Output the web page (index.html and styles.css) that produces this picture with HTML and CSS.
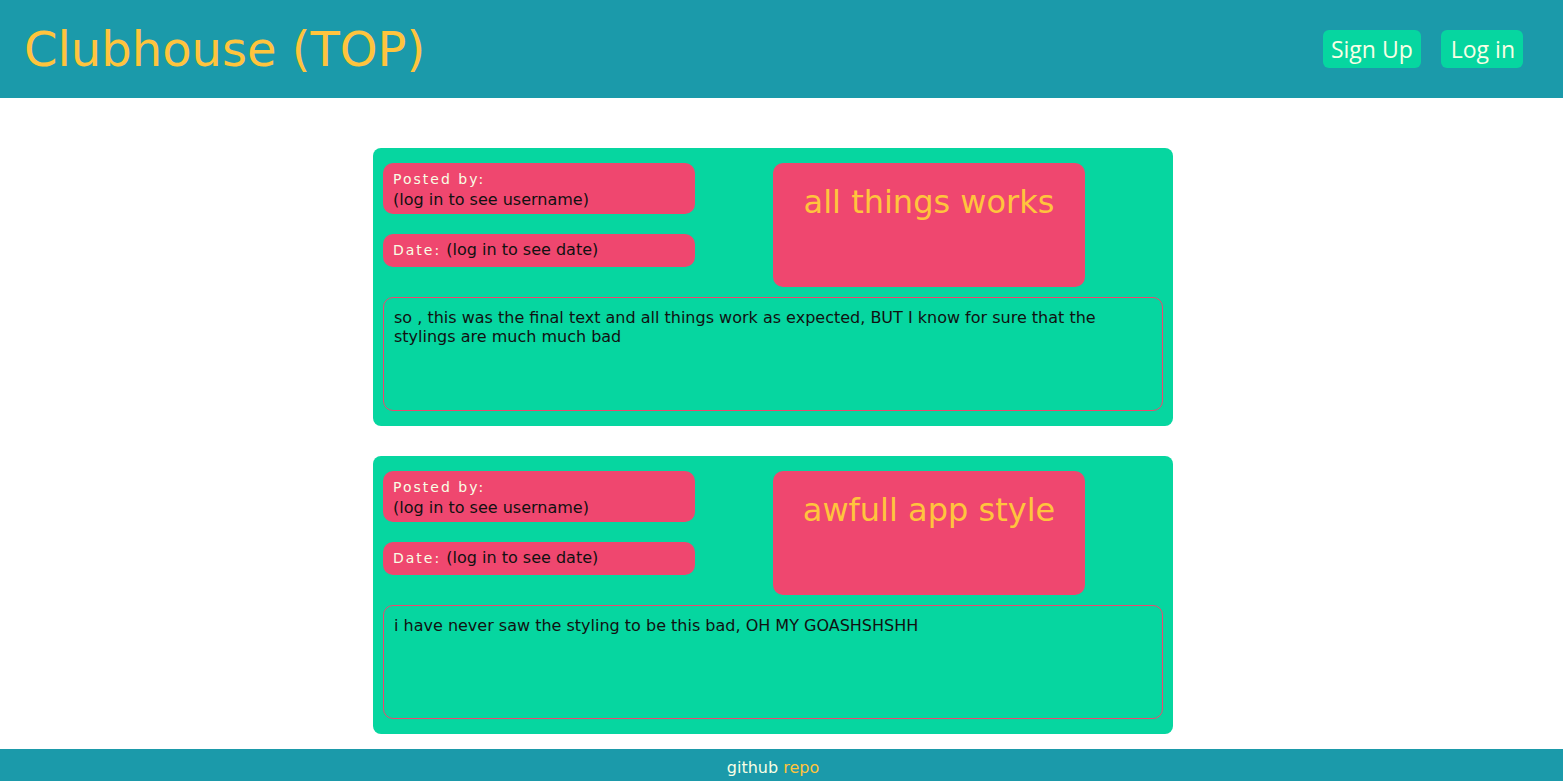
FILE: index.html
```html
<!DOCTYPE html>
<html lang="en">
<head>
<meta charset="utf-8">
<title>Clubhouse (TOP)</title>
<link rel="stylesheet" href="styles.css">
</head>
<body>
<header class="topbar">
  <h1 class="brand">Clubhouse (TOP)</h1>
  <nav class="nav">
    <a class="nav-btn" href="#">Sign Up</a>
    <a class="nav-btn" href="#">Log in</a>
  </nav>
</header>
<main class="feed">
  <article class="card">
    <div class="card-top">
      <div class="meta">
        <div class="meta-box meta-posted">
          <span class="label">Posted by:</span>
          <span class="value">(log in to see username)</span>
        </div>
        <div class="meta-box meta-date">
          <span class="label">Date:</span> <span class="value">(log in to see date)</span>
        </div>
      </div>
      <div class="title-col">
        <h2 class="title-box">all things works</h2>
      </div>
    </div>
    <div class="text-box">so , this was the final text and all things work as expected, BUT I know for sure that the stylings are much much bad</div>
  </article>
  <article class="card">
    <div class="card-top">
      <div class="meta">
        <div class="meta-box meta-posted">
          <span class="label">Posted by:</span>
          <span class="value">(log in to see username)</span>
        </div>
        <div class="meta-box meta-date">
          <span class="label">Date:</span> <span class="value">(log in to see date)</span>
        </div>
      </div>
      <div class="title-col">
        <h2 class="title-box">awfull app style</h2>
      </div>
    </div>
    <div class="text-box">i have never saw the styling to be this bad, OH MY GOASHSHSHH</div>
  </article>
</main>
<footer class="footer">
  <span class="footer-text">github</span> <a class="footer-link" href="#">repo</a>
</footer>
</body>
</html>
```

FILE: styles.css
```css
html, body {
  margin: 0;
  padding: 0;
}

body {
  font-family: "DejaVu Sans", sans-serif;
  font-size: 16px;
  color: #111;
  background: #ffffff;
}

.topbar {
  height: 98px;
  background: #1b9aaa;
  display: flex;
  align-items: center;
  justify-content: space-between;
  padding: 0 40px 0 24px;
  box-sizing: border-box;
}

.brand {
  margin: 0;
  font-size: 48px;
  font-weight: normal;
  color: #ffc43d;
  line-height: 56px;
}

.nav {
  display: flex;
  gap: 20px;
  align-items: center;
}

.nav-btn {
  display: block;
  height: 38px;
  line-height: 38px;
  padding: 0 8px;
  border-radius: 6px;
  background: #06d6a0;
  color: #f8ffe5;
  text-decoration: none;
  font-family: "Open Sans", sans-serif;
  font-size: 23px;
}

.nav-btn + .nav-btn {
  padding: 0 8px 0 10px;
}

.feed {
  display: flex;
  flex-direction: column;
  align-items: center;
  gap: 30px;
  padding: 50px 17px 15px 0;
}

.card {
  width: 800px;
  box-sizing: border-box;
  background: #06d6a0;
  border-radius: 8px;
  padding: 15px 10px;
}

.card-top {
  display: grid;
  grid-template-columns: 1fr 1fr;
}

.meta {
  display: flex;
  flex-direction: column;
  gap: 20px;
}

.meta-box {
  width: 80%;
  box-sizing: border-box;
  background: #ef476f;
  border-radius: 10px;
  padding: 0 10px;
}

.meta-posted {
  height: 51px;
  padding-top: 7px;
}

.meta-posted .label {
  display: block;
  line-height: 18px;
}

.meta-posted .value {
  display: block;
  line-height: 20px;
  padding-top: 2px;
}

.meta-date {
  height: 33px;
  padding-top: 6px;
}

.label {
  color: #f8ffe5;
  font-size: 14px;
  letter-spacing: 2px;
}

.value {
  color: #111;
}

.title-col {
  display: flex;
}

.title-box {
  width: 80%;
  height: 124px;
  box-sizing: border-box;
  margin: 0;
  padding-top: 20px;
  background: #ef476f;
  border-radius: 10px;
  color: #ffc43d;
  font-size: 32px;
  font-weight: normal;
  text-align: center;
}

.text-box {
  margin-top: 10px;
  height: 114px;
  box-sizing: border-box;
  border: 1px solid #ef476f;
  border-radius: 10px;
  padding: 10px;
  color: #111;
}

.footer {
  height: 32px;
  box-sizing: border-box;
  padding: 9px 17px 0 0;
  background: #1b9aaa;
  text-align: center;
}

.footer-text {
  color: #f8ffe5;
}

.footer-link {
  color: #ffc43d;
  text-decoration: none;
}
```
